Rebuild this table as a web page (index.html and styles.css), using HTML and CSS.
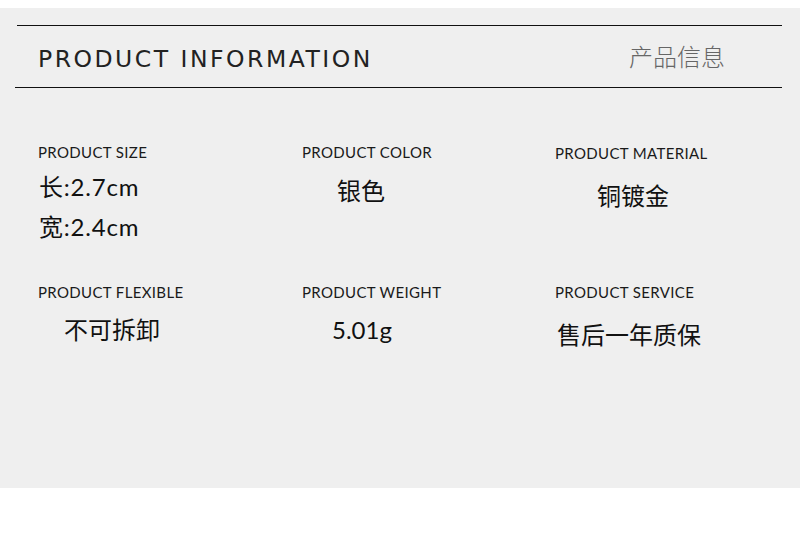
FILE: index.html
```html
<!DOCTYPE html>
<html lang="zh">
<head>
<meta charset="utf-8">
<link rel="stylesheet" href="styles.css">
</head>
<body>
<div class="panel">
  <header class="head">
    <h1 class="title">PRODUCT INFORMATION</h1>
    <span class="title-cn">产品信息</span>
  </header>
  <section class="grid">
    <div class="cell">
      <div class="label">PRODUCT SIZE</div>
      <div class="value v-size">长:2.7cm</div>
      <div class="value v-size v-size2">宽:2.4cm</div>
    </div>
    <div class="cell">
      <div class="label">PRODUCT COLOR</div>
      <div class="value v-color">银色</div>
    </div>
    <div class="cell">
      <div class="label l-mat">PRODUCT MATERIAL</div>
      <div class="value v-mat">铜镀金</div>
    </div>
    <div class="cell">
      <div class="label">PRODUCT FLEXIBLE</div>
      <div class="value v-flex">不可拆卸</div>
    </div>
    <div class="cell">
      <div class="label">PRODUCT WEIGHT</div>
      <div class="value v-weight">5.01g</div>
    </div>
    <div class="cell">
      <div class="label">PRODUCT SERVICE</div>
      <div class="value v-serv">售后一年质保</div>
    </div>
  </section>
</div>
</body>
</html>
```

FILE: styles.css
```css
html, body {
  margin: 0;
  padding: 0;
  background: #ffffff;
}
body {
  padding-top: 8px;
  font-family: "Lato", "Noto Sans CJK SC", sans-serif;
  color: #111;
}
.panel {
  background: #efefef;
  height: 480px;
  padding-top: 17px;
  box-sizing: border-box;
}
.head {
  margin: 0 18px 0 15px;
  border-bottom: 1px solid #111;
  height: 63px;
  box-sizing: border-box;
  position: relative;
  display: flex;
  align-items: center;
  justify-content: space-between;
  padding: 0 57px 0 23px;
}
.head::before {
  content: "";
  position: absolute;
  left: 2px;
  right: 0;
  top: 0;
  border-top: 1px solid #111;
}
.title {
  margin: 5px 0 0;
  font-family: "DejaVu Sans", sans-serif;
  font-weight: normal;
  font-size: 23.5px;
  letter-spacing: 2.5px;
  color: #222;
}
.title-cn {
  font-family: "Noto Sans CJK SC", sans-serif;
  font-weight: 300;
  font-size: 24px;
  color: #666;
  margin-top: -2px;
}
.grid {
  display: grid;
  grid-template-columns: 264px 253px 1fr;
  grid-template-rows: 140px 120px;
  padding: 55px 0 0 38px;
}
.label {
  font-family: "Lato", sans-serif;
  font-size: 15px;
  letter-spacing: 0.35px;
  color: #1a1a1a;
  line-height: 18px;
}
.l-mat { margin-top: 1px; }
.value {
  font-family: "Lato", "Noto Sans CJK SC", sans-serif;
  font-size: 24px;
  line-height: 28px;
  color: #111;
}
.v-size { margin: 12px 0 0 1px; letter-spacing: 0.8px; }
.v-size2 { margin-top: 12px; }
.v-color { margin: 16px 0 0 35px; }
.v-mat { margin: 20px 0 0 42px; }
.v-flex { margin: 15px 0 0 26px; }
.v-weight { margin: 15px 0 0 30px; }
.v-serv { margin: 20px 0 0 2px; }
```
